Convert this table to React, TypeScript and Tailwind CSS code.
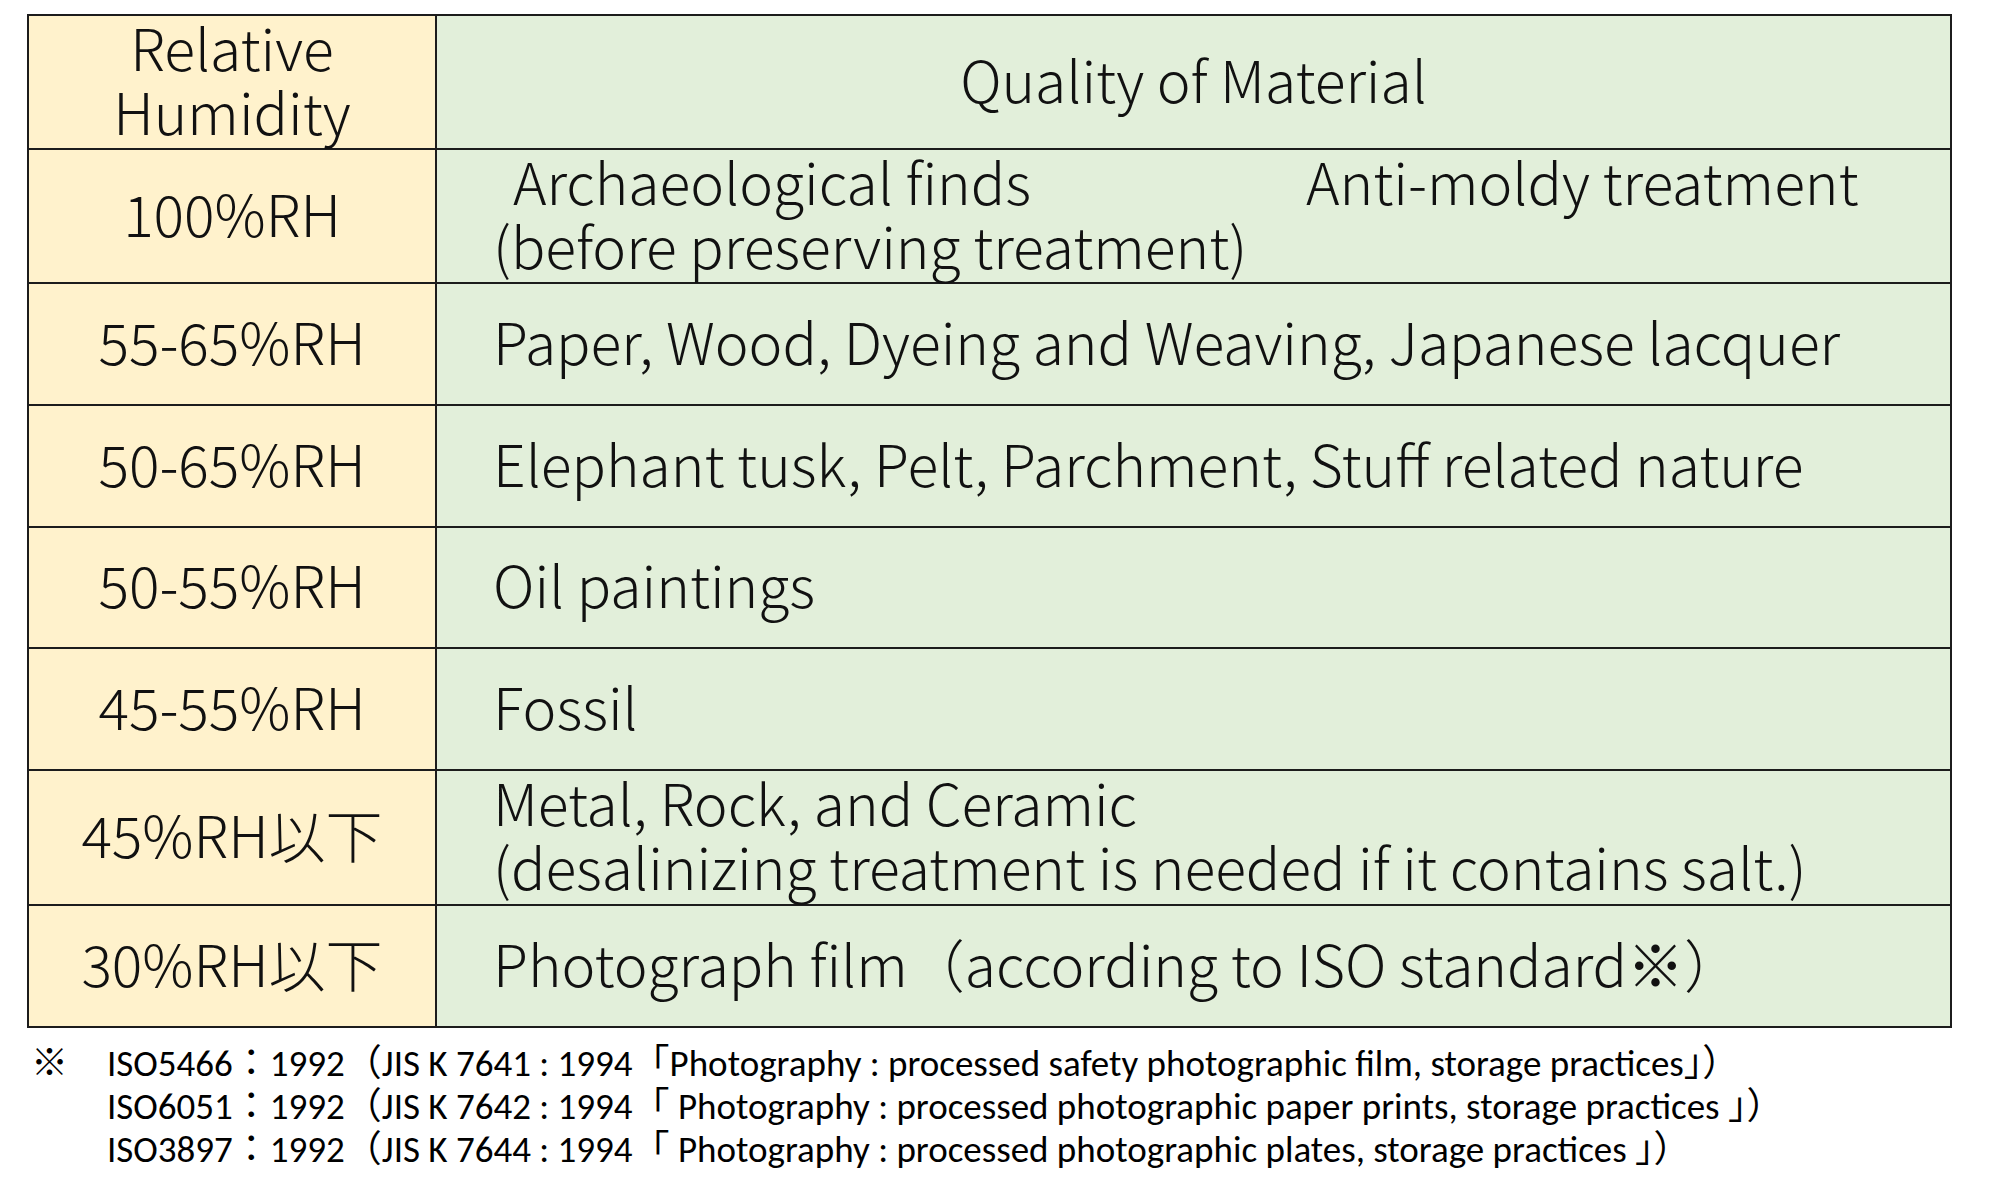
function Cell({
  children,
  className = "",
}: {
  children: React.ReactNode;
  className?: string;
}) {
  return (
    <div className={`border-r-2 border-b-2 border-[#1c1c1c] ${className}`}>
      <div className="-mt-[9px]">{children}</div>
    </div>
  );
}

function Row({
  rh,
  height,
  children,
}: {
  rh: React.ReactNode;
  height: string;
  children: React.ReactNode;
}) {
  return (
    <div className={`grid grid-cols-[408px_1fr] ${height}`}>
      <Cell className="flex items-center justify-center bg-[#fff2cc] text-center">
        {rh}
      </Cell>
      <Cell className="flex flex-col justify-center bg-[#e2efda] pl-[56px]">
        {children}
      </Cell>
    </div>
  );
}

export default function App() {
  return (
    <div className="min-h-[1193px] w-[1990px] bg-white pl-[27px] pt-[14px] text-[#111]">
      <div
        className="w-[1925px] border-l-2 border-t-2 border-[#1c1c1c] text-[57px] font-light leading-[64px]"
        style={{ fontFamily: '"Noto Sans CJK JP", sans-serif' }}
      >
        <Row
          height="h-[134px]"
          rh={
            <span>
              Relative
              <br />
              Humidity
            </span>
          }
        >
          <div className="-ml-[56px] text-center">Quality of Material</div>
        </Row>
        <Row height="h-[134px]" rh="100%RH">
          <div className="flex">
            <span className="w-[813px] pl-[20px]">Archaeological finds</span>
            <span>Anti-moldy treatment</span>
          </div>
          <div>(before preserving treatment)</div>
        </Row>
        <Row height="h-[122px]" rh="55-65%RH">
          <div>Paper, Wood, Dyeing and Weaving, Japanese lacquer</div>
        </Row>
        <Row height="h-[122px]" rh="50-65%RH">
          <div>Elephant tusk, Pelt, Parchment, Stuff related nature</div>
        </Row>
        <Row height="h-[121px]" rh="50-55%RH">
          <div>Oil paintings</div>
        </Row>
        <Row height="h-[122px]" rh="45-55%RH">
          <div>Fossil</div>
        </Row>
        <Row height="h-[135px]" rh="45%RH以下">
          <div>Metal, Rock, and Ceramic</div>
          <div>(desalinizing treatment is needed if it contains salt.)</div>
        </Row>
        <Row height="h-[122px]" rh="30%RH以下">
          <div>Photograph film（according to ISO standard※）</div>
        </Row>
      </div>

      <div
        className="mt-[14px] flex text-[37px] leading-[43px] text-black"
        style={{
          fontFamily:
            'Carlito, "Liberation Sans Narrow", Roboto, "Noto Sans CJK JP", sans-serif',
        }}
      >
        <div className="w-[80px] pl-[4px]">※</div>
        <div className="flex flex-col">
          <div>
            ISO5466：1992（JIS K 7641 : 1994「Photography : processed safety
            photographic film, storage practices」）
          </div>
          <div>
            ISO6051：1992（JIS K 7642 : 1994「 Photography : processed
            photographic paper prints, storage practices 」）
          </div>
          <div>
            ISO3897：1992（JIS K 7644 : 1994「 Photography : processed
            photographic plates, storage practices 」）
          </div>
        </div>
      </div>
    </div>
  );
}
